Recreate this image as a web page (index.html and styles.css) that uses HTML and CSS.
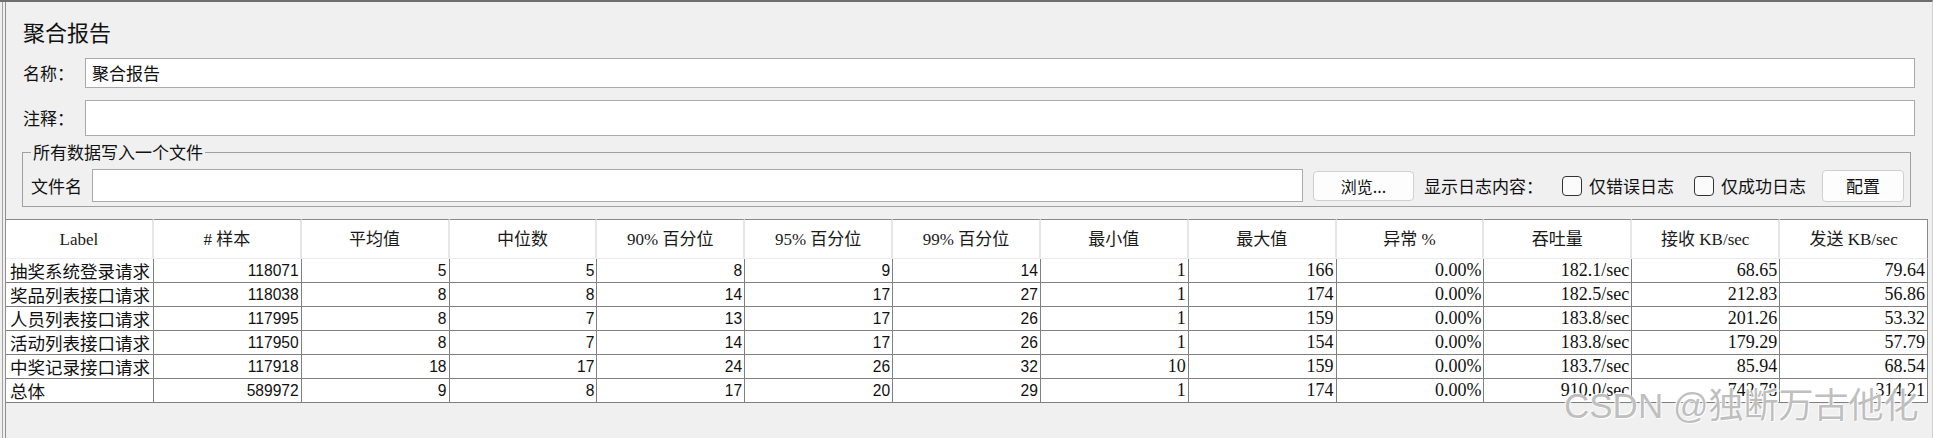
FILE: index.html
```html
<!DOCTYPE html>
<html lang="zh">
<head>
<meta charset="utf-8">
<title>聚合报告</title>
<link rel="stylesheet" href="styles.css">
</head>
<body>
<div class="window">
  <div class="frame">
    <div class="panel">
      <div class="title">聚合报告</div>
      <div class="field">
        <span class="lbl">名称：</span>
        <div class="input">聚合报告</div>
      </div>
      <div class="field">
        <span class="lbl">注释：</span>
        <div class="input tall"></div>
      </div>
      <fieldset class="fs">
        <legend>所有数据写入一个文件</legend>
        <div class="file-row">
          <span class="lbl2">文件名</span>
          <div class="input file"></div>
          <button class="btn browse">浏览...</button>
          <span class="txt show">显示日志内容：</span>
          <span class="cb cb1"></span>
          <span class="txt">仅错误日志</span>
          <span class="cb cb2"></span>
          <span class="txt">仅成功日志</span>
          <button class="btn cfg">配置</button>
        </div>
      </fieldset>
      <table class="grid">
        <thead>
          <tr>
            <th>Label</th><th># 样本</th><th>平均值</th><th>中位数</th><th>90% 百分位</th><th>95% 百分位</th><th>99% 百分位</th><th>最小值</th><th>最大值</th><th>异常 %</th><th>吞吐量</th><th>接收 KB/sec</th><th>发送 KB/sec</th>
          </tr>
        </thead>
        <tbody>
          <tr><td class="l">抽奖系统登录请求</td><td class="s">118071</td><td class="s">5</td><td class="s">5</td><td class="s">8</td><td class="s">9</td><td class="s">14</td><td class="r">1</td><td class="r">166</td><td class="r">0.00%</td><td class="r">182.1/sec</td><td class="r">68.65</td><td class="r">79.64</td></tr>
          <tr><td class="l">奖品列表接口请求</td><td class="s">118038</td><td class="s">8</td><td class="s">8</td><td class="s">14</td><td class="s">17</td><td class="s">27</td><td class="r">1</td><td class="r">174</td><td class="r">0.00%</td><td class="r">182.5/sec</td><td class="r">212.83</td><td class="r">56.86</td></tr>
          <tr><td class="l">人员列表接口请求</td><td class="s">117995</td><td class="s">8</td><td class="s">7</td><td class="s">13</td><td class="s">17</td><td class="s">26</td><td class="r">1</td><td class="r">159</td><td class="r">0.00%</td><td class="r">183.8/sec</td><td class="r">201.26</td><td class="r">53.32</td></tr>
          <tr><td class="l">活动列表接口请求</td><td class="s">117950</td><td class="s">8</td><td class="s">7</td><td class="s">14</td><td class="s">17</td><td class="s">26</td><td class="r">1</td><td class="r">154</td><td class="r">0.00%</td><td class="r">183.8/sec</td><td class="r">179.29</td><td class="r">57.79</td></tr>
          <tr><td class="l">中奖记录接口请求</td><td class="s">117918</td><td class="s">18</td><td class="s">17</td><td class="s">24</td><td class="s">26</td><td class="s">32</td><td class="r">10</td><td class="r">159</td><td class="r">0.00%</td><td class="r">183.7/sec</td><td class="r">85.94</td><td class="r">68.54</td></tr>
          <tr><td class="l">总体</td><td class="s">589972</td><td class="s">9</td><td class="s">8</td><td class="s">17</td><td class="s">20</td><td class="s">29</td><td class="r">1</td><td class="r">174</td><td class="r">0.00%</td><td class="r">910.0/sec</td><td class="r">742.78</td><td class="r">314.21</td></tr>
        </tbody>
      </table>
    </div>
  </div>
  <div class="watermark">CSDN @独断万古他化</div>
</div>
</body>
</html>
```
FILE: styles.css
```css
html, body {
  margin: 0;
  padding: 0;
  background: #f0f0f0;
  overflow: hidden;
}
body {
  font-family: "Noto Sans CJK SC", sans-serif;
  color: #111;
}
.window {
  position: relative;
  width: 1933px;
  height: 438px;
  box-sizing: border-box;
  border-top: 2px solid #6e6e6e;
  border-right: 1px solid #cfcfcf;
  background: #f0f0f0;
  padding-left: 2px;
  overflow: hidden;
}
.frame {
  height: 100%;
  border-left: 1px solid #a3a3a3;
  padding-left: 2px;
}
.panel {
  height: 100%;
  border-left: 1px solid #8f8f8f;
}
.title {
  font-size: 22px;
  line-height: 30px;
  padding: 14px 0 0 17px;
  color: #111;
}
.field {
  display: flex;
  align-items: center;
  margin: 12px 17px 0 17px;
}
.lbl {
  width: 62px;
  font-size: 17px;
  line-height: 24px;
}
.input {
  flex: 1;
  height: 30px;
  box-sizing: border-box;
  border: 1px solid #ababab;
  background: #fff;
  font-size: 17px;
  line-height: 28px;
  padding-left: 6px;
}
.input.tall {
  height: 36px;
}
.fs {
  margin: 4px 21px 0 16px;
  padding: 5px 6px 4px 8px;
  border: 1px solid #a0a0a0;
  min-width: 0;
}
.fs legend {
  padding: 0 2px;
  font-size: 17px;
  line-height: 24px;
}
.file-row {
  display: flex;
  align-items: center;
  height: 33px;
  font-size: 17px;
}
.lbl2 {
  width: 61px;
  line-height: 24px;
}
.input.file {
  height: 33px;
}
.btn {
  box-sizing: border-box;
  background: #fdfdfd;
  border: 1px solid #d0d0d0;
  border-radius: 4px;
  font-family: "Noto Sans CJK SC", sans-serif;
  color: #111;
  padding: 0;
}
.browse {
  margin-left: 10px;
  width: 101px;
  height: 30px;
  font-size: 16px;
}
.cfg {
  margin-left: 16px;
  width: 82px;
  height: 32px;
  font-size: 17px;
}
.txt {
  line-height: 24px;
  white-space: nowrap;
}
.show {
  margin-left: 10px;
}
.cb {
  width: 20px;
  height: 20px;
  box-sizing: border-box;
  border: 1.5px solid #333;
  border-radius: 4px;
  background: #fbfbfb;
  margin-right: 7px;
}
.cb1 {
  margin-left: 19px;
}
.cb2 {
  margin-left: 20px;
}
.grid {
  margin-top: 12px;
  width: 1922px;
  table-layout: fixed;
  border-collapse: separate;
  border-spacing: 0;
  background: #fff;
}
.grid th {
  padding: 0;
  height: 38px;
  line-height: 37px;
  border-top: 1px solid #8a8a8a;
  border-bottom: 1px solid #ececec;
  border-right: 2px solid #e6e6e6;
  font-family: "Liberation Serif", "Noto Sans CJK SC", serif;
  font-weight: normal;
  font-size: 17px;
  color: #1a1a1a;
  text-align: center;
  white-space: nowrap;
}
.grid th:last-child {
  border-right: 1px solid #8a8a8a;
}
.grid td {
  padding: 0 2px 0 3px;
  height: 23px;
  line-height: 23px;
  border-right: 1px solid #808080;
  border-bottom: 1px solid #808080;
  text-align: right;
  white-space: nowrap;
  overflow: hidden;
  color: #111;
}
.grid td.l {
  text-align: left;
  padding-left: 4px;
  font-size: 17.5px;
  font-family: "Noto Sans CJK SC", sans-serif;
}
.grid td.s {
  font-family: "Liberation Sans", sans-serif;
  font-size: 15.6px;
}
.grid td.r {
  font-family: "Liberation Serif", serif;
  font-size: 18px;
}
.watermark {
  position: absolute;
  left: 1564px;
  top: 384px;
  font-family: "Liberation Sans", "Noto Sans CJK SC", sans-serif;
  font-size: 35px;
  line-height: 40px;
  white-space: nowrap;
  color: rgba(170, 170, 170, 0.75);
  text-shadow: 1px 1px 0 rgba(255, 255, 255, 0.9), -1px -1px 0 rgba(255, 255, 255, 0.9);
}
```
